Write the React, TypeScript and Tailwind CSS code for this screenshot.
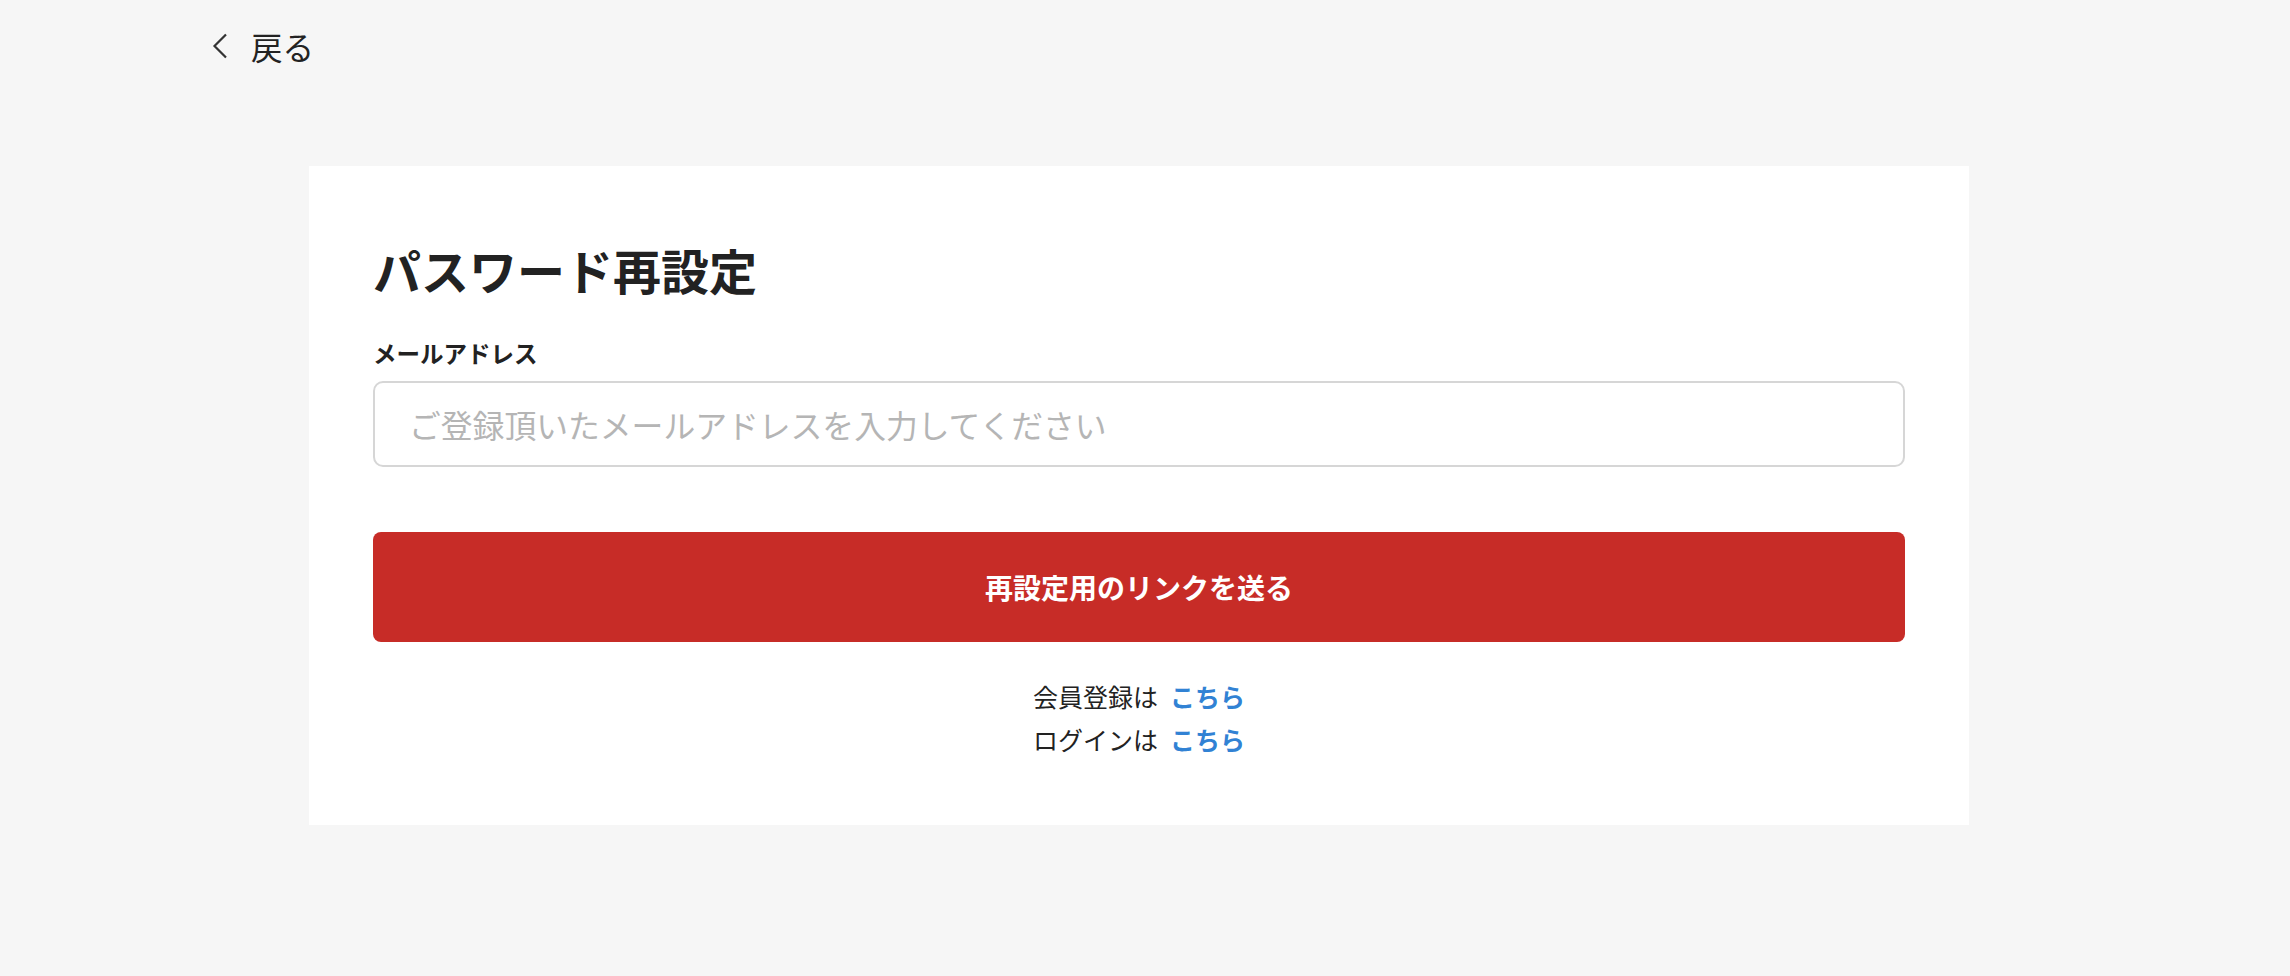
export default function App() {
  const font = { fontFamily: '"Noto Sans CJK JP", "Noto Sans", sans-serif' };
  return (
    <div className="min-h-[976px] w-full bg-[#f6f6f6] text-[#222]" style={font}>
      <div className="pl-[212px] pt-[23px]">
        <button className="flex items-center gap-[23px] text-[31.5px] leading-[46px] text-[#222]">
          <svg width="16" height="26" viewBox="0 0 16 26" fill="none">
            <polyline points="14,1.5 2.5,13 14,24.5" stroke="#333" strokeWidth="2.2" strokeLinejoin="miter" />
          </svg>
          <span>戻る</span>
        </button>
      </div>

      <div className="ml-[309px] mt-[97px] w-[1660px] bg-white px-[64px] pt-[70px] pb-[64px]">
        <h1 className="text-[48px] font-bold leading-[66px] text-[#222]">パスワード再設定</h1>

        <label className="mt-[34px] block text-[23.5px] font-bold leading-[34px] text-[#222]">
          メールアドレス
        </label>
        <input
          type="email"
          placeholder="ご登録頂いたメールアドレスを入力してください"
          className="mt-[11px] block h-[86px] w-full rounded-[10px] border-2 border-[#d6d6d6] bg-white pl-[34px] text-[31.8px] text-[#222] outline-none placeholder:text-[#b5b5b5]"
          style={font}
        />

        <button className="mt-[65px] flex h-[110px] w-full items-center justify-center rounded-[8px] bg-[#c72c27] text-[28px] font-bold text-white">
          再設定用のリンクを送る
        </button>

        <div className="mt-[33px] flex flex-col items-center text-[25px] leading-[43px] text-[#222]">
          <p>
            会員登録は<a className="ml-[12px] font-bold text-[#3182d4]">こちら</a>
          </p>
          <p>
            ログインは<a className="ml-[12px] font-bold text-[#3182d4]">こちら</a>
          </p>
        </div>
      </div>
    </div>
  );
}
